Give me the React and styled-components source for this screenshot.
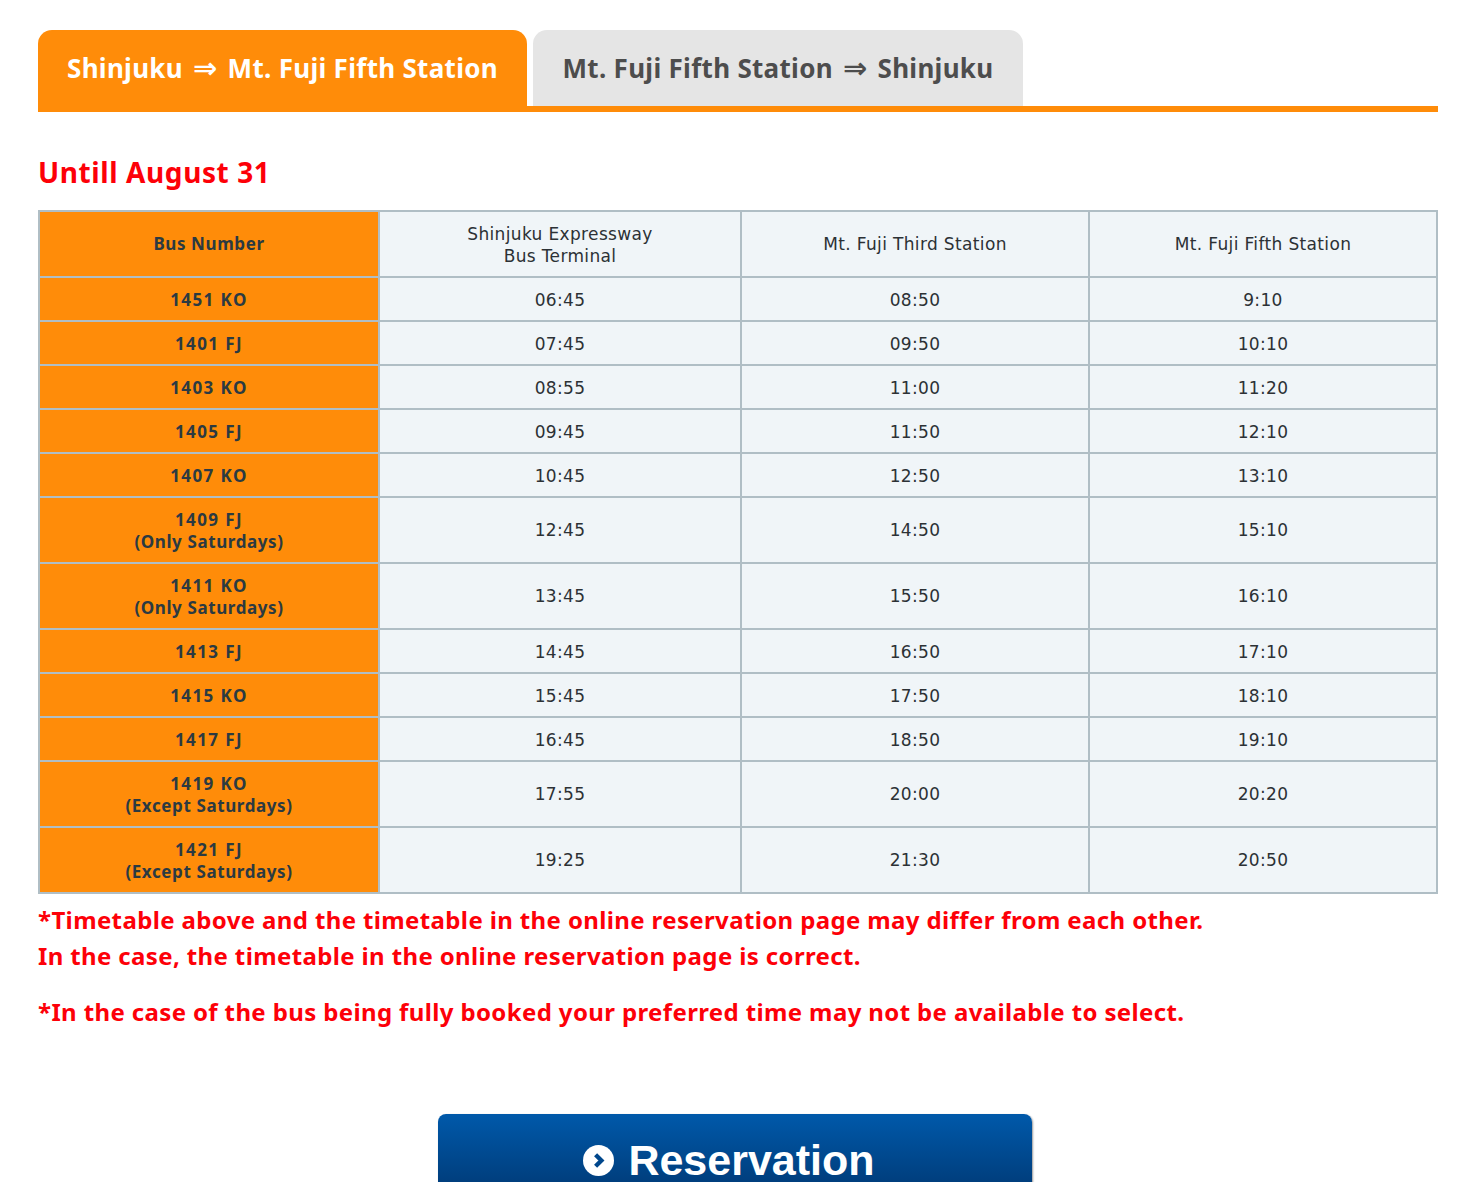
import styled, { createGlobalStyle } from "styled-components";

const GlobalStyle = createGlobalStyle`
    html, body {
        margin: 0;
        padding: 0;
        background: #fff;
    }
    body {
        font-family: "Noto Sans", "DejaVu Sans", sans-serif;
        height: 1182px;
        overflow: hidden;
    }
`

const rows = [
    ["1451 KO", null, "06:45", "08:50", "9:10"],
    ["1401 FJ", null, "07:45", "09:50", "10:10"],
    ["1403 KO", null, "08:55", "11:00", "11:20"],
    ["1405 FJ", null, "09:45", "11:50", "12:10"],
    ["1407 KO", null, "10:45", "12:50", "13:10"],
    ["1409 FJ", "(Only Saturdays)", "12:45", "14:50", "15:10"],
    ["1411 KO", "(Only Saturdays)", "13:45", "15:50", "16:10"],
    ["1413 FJ", null, "14:45", "16:50", "17:10"],
    ["1415 KO", null, "15:45", "17:50", "18:10"],
    ["1417 FJ", null, "16:45", "18:50", "19:10"],
    ["1419 KO", "(Except Saturdays)", "17:55", "20:00", "20:20"],
    ["1421 FJ", "(Except Saturdays)", "19:25", "21:30", "20:50"],
]

export default function App() {
    return (
        <Page>
            <GlobalStyle />

            <Tabs>
                <Tab $active>Shinjuku<Seta>⇒</Seta>Mt. Fuji Fifth Station</Tab>
                <Tab>Mt. Fuji Fifth Station<Seta>⇒</Seta>Shinjuku</Tab>
            </Tabs>

            <Titulo>Untill August 31</Titulo>

            <Tabela>
                <colgroup>
                    <col style={{ width: 340 }} />
                    <col style={{ width: 362 }} />
                    <col style={{ width: 348 }} />
                    <col style={{ width: 348 }} />
                </colgroup>
                <thead>
                    <tr>
                        <BusCell as="th" $alta>Bus Number</BusCell>
                        <Cell as="th">Shinjuku Expressway<br />Bus Terminal</Cell>
                        <Cell as="th" $alta>Mt. Fuji Third Station</Cell>
                        <Cell as="th" $alta>Mt. Fuji Fifth Station</Cell>
                    </tr>
                </thead>
                <tbody>
                    {rows.map(r => (
                        <tr key={r[0]}>
                            <BusCell><NumeroBus>{r[0]}</NumeroBus>{r[1] && <><br />{r[1]}</>}</BusCell>
                            <Cell $alta={!!r[1]}>{r[2]}</Cell>
                            <Cell $alta={!!r[1]}>{r[3]}</Cell>
                            <Cell $alta={!!r[1]}>{r[4]}</Cell>
                        </tr>
                    ))}
                </tbody>
            </Tabela>

            <Aviso>
                *Timetable above and the timetable in the online reservation page may differ from each other.<br />
                In the case, the timetable in the online reservation page is correct.
            </Aviso>
            <Aviso>*In the case of the bus being fully booked your preferred time may not be available to select.</Aviso>

            <BotaoReserva>
                <svg width="31" height="31" viewBox="0 0 32 32">
                    <circle cx="16" cy="16" r="16" fill="#fff" />
                    <path d="M13 10 L19 16 L13 22" fill="none" stroke="#00478c" strokeWidth="4.5" />
                </svg>
                Reservation
            </BotaoReserva>
        </Page>
    )
}

const Page = styled.div`
    padding: 30px 38px 0;
`
const Tabs = styled.div`
    display: flex;
    gap: 6px;
    height: 76px;
    border-bottom: 6px solid #ff8c09;
`
const Tab = styled.div`
    box-sizing: border-box;
    width: ${p => p.$active ? "489px" : "490px"};
    height: ${p => p.$active ? "82px" : "76px"};
    padding: 20px 0 0;
    border-radius: 14px 14px 0 0;
    background-color: ${p => p.$active ? "#ff8c09" : "#e5e5e5"};
    color: ${p => p.$active ? "#fff" : "#4d4d4d"};
    font-size: 26px;
    letter-spacing: 0.3px;
    line-height: 36px;
    font-weight: 700;
    text-align: center;
    white-space: nowrap;
`
const Seta = styled.span`
    margin: 0 10px;
    font-size: 29px;
    line-height: 30px;
`
const Titulo = styled.h2`
    margin: 42px 0 20px;
    height: 36px;
    color: #fd0008;
    font-size: 28px;
    letter-spacing: 0.6px;
    line-height: 36px;
    font-weight: 700;
`
const Tabela = styled.table`
    width: 1400px;
    table-layout: fixed;
    border-collapse: collapse;
    border: 2px solid #b0bec5;
`
const Cell = styled.td`
    padding: ${p => p.$alta ? "10px 0" : "11px 0 9px"};
    border: 2px solid #b0bec5;
    background-color: #f0f5f8;
    color: #2c3135;
    font-family: "DejaVu Sans", sans-serif;
    font-size: 17px;
    letter-spacing: 0.35px;
    line-height: 22px;
    font-weight: 400;
    text-align: center;
    vertical-align: middle;
`
const BusCell = styled(Cell)`
    background-color: #ff8c09;
    color: #2b3a42;
    font-family: "Noto Sans", sans-serif;
    font-weight: 700;
    letter-spacing: 0.6px;
`
const NumeroBus = styled.span`
    letter-spacing: 1.4px;
`
const Aviso = styled.p`
    margin: 8px 0 20px;
    color: #fd0008;
    font-size: 24px;
    letter-spacing: 0.37px;
    line-height: 36px;
    font-weight: 700;
    white-space: nowrap;
`
const BotaoReserva = styled.div`
    box-sizing: border-box;
    display: flex;
    align-items: center;
    justify-content: center;
    gap: 14px;
    width: 594px;
    height: 92px;
    margin: 84px 0 0 400px;
    padding-right: 12px;
    border-radius: 8px 8px 0 0;
    background: linear-gradient(#0059aa, #00356e);
    box-shadow: 1px 1px 2px rgba(0, 0, 0, 0.4);
    color: #fff;
    font-family: "Liberation Sans", Arial, sans-serif;
    font-size: 43px;
    font-weight: 700;
`
